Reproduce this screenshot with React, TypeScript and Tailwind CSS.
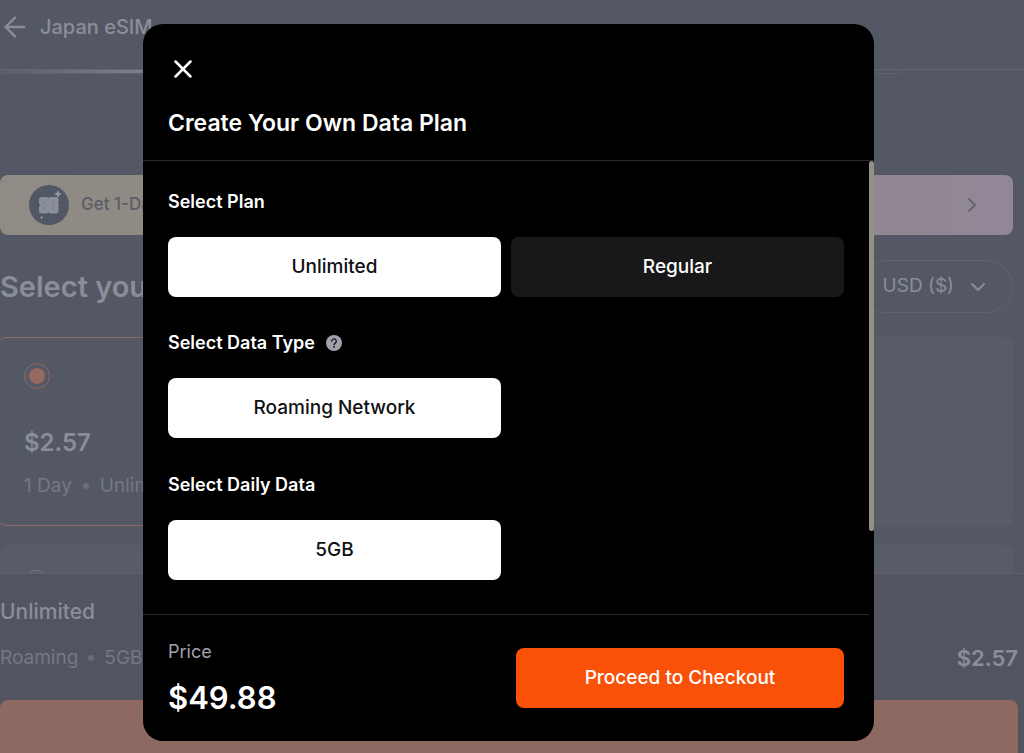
import { useState } from "react";
import { ArrowLeft, ChevronDown, ChevronRight, X } from "lucide-react";

const CouponIcon = () => (
  <svg viewBox="0 0 40 40" className="size-10 shrink-0" aria-hidden="true">
    <circle cx="20" cy="20" r="20" fill="#525766" />
    <path
      d="M12.500 12h5.500l1.500 1L21 12h6a2.500 2.500 0 0 1 2.500 2.500v2.500a1.500 1.500 0 0 1-1 1.500 1.500 1.500 0 0 1 0 3 1.500 1.500 0 0 1 1 1.500v2.500A2.500 2.500 0 0 1 27 28.500h-6l-1.500-1-1.500 1h-5.500A2.500 2.500 0 0 1 10 26v-3a2.500 2.500 0 0 1 1.500-2.700A2.500 2.500 0 0 1 10 17.500v-3a2.500 2.500 0 0 1 2.500-2.500Z"
      fill="#8b8f9a"
    />
    <path
      d="M24.500 15v11M14 18h2M14 23h2"
      stroke="#777b87"
      strokeWidth="1.200"
      strokeDasharray="2 1.500"
    />
    <path d="m29 5 1.200 2.800L33 9l-2.800 1.200L29 13l-1.200-2.800L25 9l2.800-1.200Z" fill="#9498a2" />
    <path d="m12.500 30.500.6 1.400 1.400.6-1.400.6-.6 1.400-.6-1.400-1.400-.6 1.400-.6Z" fill="#9498a2" />
  </svg>
);

const HelpIcon = () => (
  <svg viewBox="0 0 16 16" className="size-4" aria-hidden="true">
    <circle cx="8" cy="8" r="8" fill="#a1a1aa" />
    <path
      d="M5.700 6.200a2.300 2.300 0 1 1 3.600 1.900C8.400 8.700 8 9 8 9.800"
      fill="none"
      stroke="#18181b"
      strokeWidth="1.300"
      strokeLinecap="round"
    />
    <circle cx="8" cy="12" r=".9" fill="#18181b" />
  </svg>
);

type OptionProps = {
  label: string;
  selected: boolean;
  onClick?: () => void;
};

const Option = ({ label, selected, onClick }: OptionProps) => (
  <button
    type="button"
    aria-pressed={selected}
    onClick={onClick}
    className={
      selected
        ? "h-[60px] rounded-lg bg-white pt-px text-[19px] font-medium text-[#111113]"
        : "h-[60px] rounded-lg bg-[#18181a] pt-px text-[19px] font-medium text-white"
    }
  >
    {label}
  </button>
);

const Page = () => (
  <div className="flex h-full flex-col overflow-hidden text-[#8a8e9a]">
    <header className="flex h-[70px] shrink-0 items-start border-b border-[#626672] pt-[11px]">
      <div className="flex items-center gap-[9px]">
        <a href="#back" aria-label="Back" className="-ml-px">
          <ArrowLeft size={32} strokeWidth={1.75} />
        </a>
        <span className="text-xl leading-8 font-medium">Japan eSIM</span>
      </div>
    </header>

    <main className="min-h-0 flex-1 overflow-hidden pr-[11px]">
      <div className="mr-28 h-1 rounded-b-lg border-b border-[#5e626e] bg-linear-to-r from-[#5a5e6a] via-[#7c7f89] via-15% to-[#545864] to-25%" />

      <a
        href="#trial"
        className="mt-[101px] flex h-[60px] items-center gap-3 rounded-lg bg-linear-to-r from-[#918b85] via-[#8f8882] via-50% to-[#918797] px-[29px] text-[#5b5d67]"
      >
        <CouponIcon />
        <span className="flex-1 text-[17px] font-medium">Get 1-Day</span>
        <ChevronRight size={24} strokeWidth={1.75} />
      </a>

      <div className="mt-[25px] flex items-center justify-between">
        <h2 className="text-[29px] leading-10 font-semibold">Select your plan</h2>
        <button
          type="button"
          className="flex h-[53px] items-center gap-3 rounded-full border border-[#5f636f] px-[22px] text-[19px]"
        >
          USD ($)
          <ChevronDown size={24} />
        </button>
      </div>

      <div className="mt-6 grid grid-cols-2 gap-x-4 gap-y-[19px]">
        <label className="-ml-0.5 block h-[189px] rounded-lg border border-[#8b6b65] px-[25px] pt-[25px]">
          <input
            type="radio"
            name="plan"
            defaultChecked
            className="block size-[26px] appearance-none rounded-full border border-[#916b63] bg-[#966a5f] bg-clip-content p-1"
          />
          <span className="mt-[38px] block text-2xl leading-8 font-semibold">$2.57</span>
          <span className="mt-[13px] flex items-center gap-[9px] text-[19px] leading-7 text-[#747884]">
            1 Day
            <span className="mx-0.5 size-[6px] rounded-full bg-[#696d79]" />
            <span className="w-12 overflow-hidden">Unlimited</span>
          </span>
        </label>
        <div className="rounded-lg bg-[#585c67]" />
        <label className="block h-[189px] rounded-lg bg-[#585c67] px-6 pt-[25px]">
          <input
            type="radio"
            name="plan"
            aria-label="Second plan"
            className="block size-[26px] appearance-none rounded-full border border-[#777b86]"
          />
        </label>
        <div className="rounded-lg bg-[#585c67]" />
      </div>
    </main>

    <footer className="-mb-2 shrink-0 border-t border-[#5e626e] bg-[#525561] pt-6 pr-[6px]">
      <p className="text-[21px] leading-7 font-medium">Unlimited</p>
      <div className="mt-4 flex items-center justify-between">
        <p className="flex items-center gap-2 text-[19px] leading-8 text-[#747884]">
          Roaming
          <span className="mx-0.5 size-[6px] rounded-full bg-[#696d79]" />
          5GB
        </p>
        <p className="text-[22px] leading-8 font-semibold">$2.57</p>
      </div>
      <button type="button" aria-label="Buy now" className="mt-[26px] block h-[61px] w-full rounded-lg bg-[#8e6962]" />
    </footer>
  </div>
);

const PlanDialog = () => {
  const [plan, setPlan] = useState("Unlimited");

  return (
    <div
      role="dialog"
      aria-labelledby="dialog-title"
      className="flex w-full max-w-[731px] flex-col overflow-hidden rounded-[20px] bg-black text-white"
    >
      <div className="border-b border-[#2b2b2d] px-[25px] pt-[30px] pb-5">
        <button type="button" aria-label="Close" className="block">
          <X size={30} strokeWidth={2} />
        </button>
        <h1 id="dialog-title" className="mt-[22px] text-[23px] leading-[34px] font-semibold">
          Create Your Own Data Plan
        </h1>
      </div>

      <div className="relative px-[25px] pt-[27px] pb-[34px] pr-[30px]">
        <h3 className="text-lg leading-7 font-semibold">Select Plan</h3>
        <div className="mt-[21px] grid grid-cols-2 gap-[10px]">
          {["Unlimited", "Regular"].map((name) => (
            <Option key={name} label={name} selected={plan === name} onClick={() => setPlan(name)} />
          ))}
        </div>

        <h3 className="mt-8 flex items-center gap-[11px] text-lg leading-7 font-semibold">
          Select Data Type
          <button type="button" aria-label="About data types">
            <HelpIcon />
          </button>
        </h3>
        <div className="mt-[21px] grid grid-cols-2 gap-[10px]">
          <Option label="Roaming Network" selected />
        </div>

        <h3 className="mt-[33px] text-lg leading-7 font-semibold">Select Daily Data</h3>
        <div className="mt-[21px] grid grid-cols-2 gap-[10px]">
          <Option label="5GB" selected />
        </div>

        {/* scroll thumb */}
        <div className="absolute top-0 right-0 h-[370px] w-[5px] rounded-full bg-[#929185]" />
      </div>

      <div className="mr-[5px] flex items-center justify-between border-t border-[#2b2b2d] px-[25px] py-[23px]">
        <div>
          <p className="text-lg leading-7 text-[#a1a1aa]">Price</p>
          <p className="mt-3 text-[31px] leading-10 font-semibold">$49.88</p>
        </div>
        <button
          type="button"
          className="h-[60px] w-full max-w-[328px] rounded-lg bg-[#f95108] pt-px text-[19px] font-medium text-white"
        >
          Proceed to Checkout
        </button>
      </div>
    </div>
  );
};

export default function App() {
  return (
    <div className="relative h-screen overflow-hidden bg-[#545864] font-['Inter',sans-serif]">
      <Page />
      <div className="absolute inset-0 flex items-start justify-center pt-6 pr-[7px]">
        <PlanDialog />
      </div>
    </div>
  );
}
